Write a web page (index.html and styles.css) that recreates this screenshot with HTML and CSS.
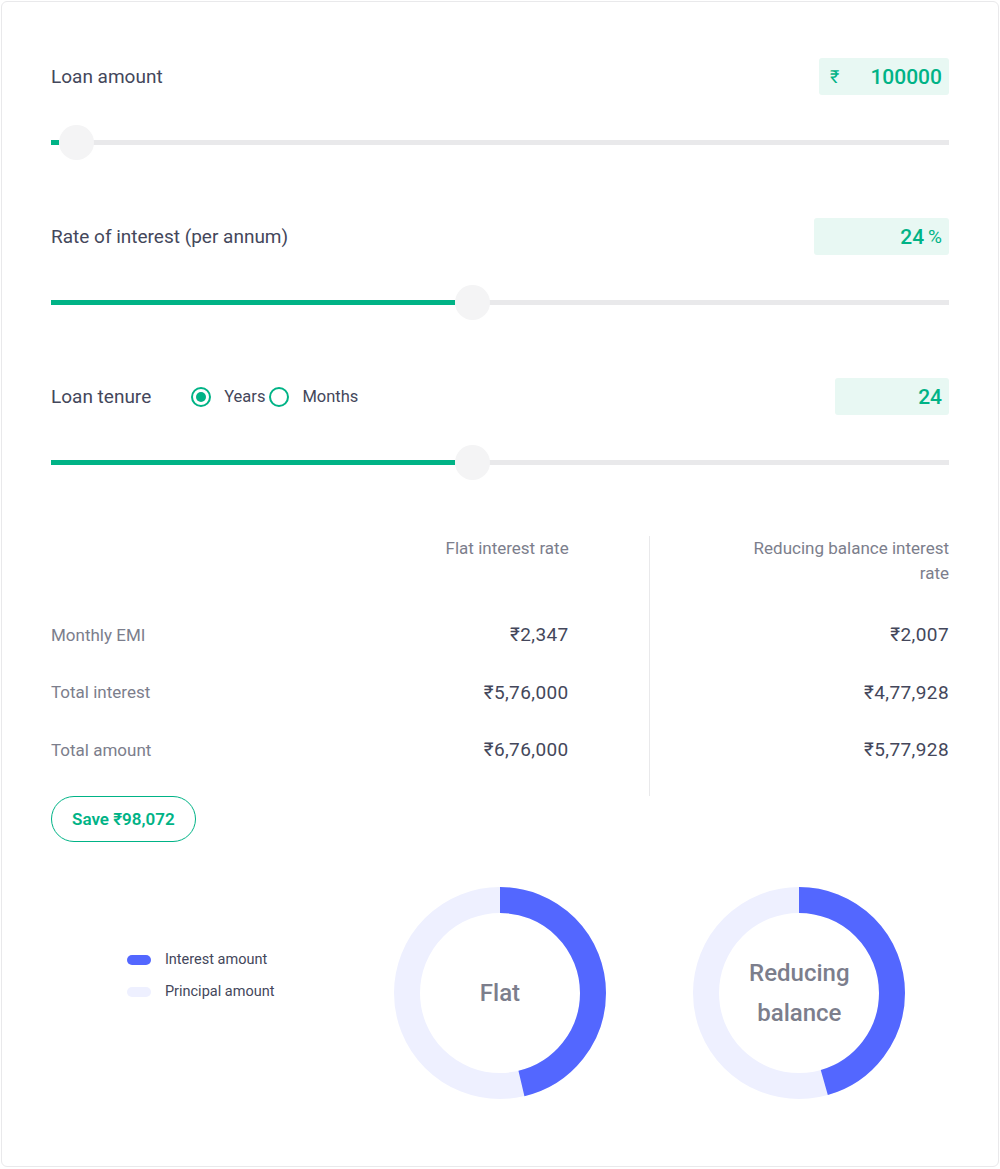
FILE: index.html
```html
<!DOCTYPE html>
<html lang="en">
<head>
  <meta charset="UTF-8">
  <meta name="viewport" content="width=device-width, initial-scale=1.0">
  <title>Flat vs Reducing Balance Calculator</title>
  <link rel="stylesheet" href="styles.css">
</head>
<body>
  <div class="calc-card">
    <div class="field">
      <div class="field-head">
        <span class="field-label">Loan amount</span>
        <div class="value-box amount-box"><span class="value-prefix">₹</span><span class="value-num">100000</span></div>
      </div>
      <div class="slider" style="--p: 0.0093">
        <div class="slider-fill"></div>
        <div class="slider-thumb"></div>
      </div>
    </div>

    <div class="field">
      <div class="field-head">
        <span class="field-label">Rate of interest (per annum)</span>
        <div class="value-box rate-box"><span class="value-num">24</span><span class="value-suffix">%</span></div>
      </div>
      <div class="slider" style="--p: 0.4687">
        <div class="slider-fill"></div>
        <div class="slider-thumb"></div>
      </div>
    </div>

    <div class="field last">
      <div class="field-head">
        <div class="tenure-left">
          <span class="field-label">Loan tenure</span>
          <div class="radio-group">
            <label class="radio checked"><span class="radio-dot"></span>Years</label>
            <label class="radio"><span class="radio-dot"></span>Months</label>
          </div>
        </div>
        <div class="value-box tenure-box"><span class="value-num">24</span></div>
      </div>
      <div class="slider" style="--p: 0.4687">
        <div class="slider-fill"></div>
        <div class="slider-thumb"></div>
      </div>
    </div>

    <div class="compare">
      <div class="compare-col">
        <div class="compare-head"></div>
        <div class="compare-cell row-label">Monthly EMI</div>
        <div class="compare-cell row-label">Total interest</div>
        <div class="compare-cell row-label">Total amount</div>
      </div>
      <div class="compare-col flat-col">
        <div class="compare-head">Flat interest rate</div>
        <div class="compare-cell row-value">₹2,347</div>
        <div class="compare-cell row-value">₹5,76,000</div>
        <div class="compare-cell row-value">₹6,76,000</div>
      </div>
      <div class="compare-col reducing-col">
        <div class="compare-head">Reducing balance interest rate</div>
        <div class="compare-cell row-value">₹2,007</div>
        <div class="compare-cell row-value">₹4,77,928</div>
        <div class="compare-cell row-value">₹5,77,928</div>
      </div>
    </div>

    <button class="save-btn">Save ₹98,072</button>

    <div class="charts">
      <ul class="legend">
        <li><span class="legend-key interest"></span>Interest amount</li>
        <li><span class="legend-key principal"></span>Principal amount</li>
      </ul>
      <div class="donut">
        <svg width="212" height="212" viewBox="0 0 212 212">
          <circle cx="106" cy="106" r="93" fill="none" stroke="#eef0ff" stroke-width="26"/>
          <circle cx="106" cy="106" r="93" fill="none" stroke="#5367ff" stroke-width="26"
                  stroke-dasharray="270 600" transform="rotate(-90 106 106)"/>
        </svg>
        <span class="donut-label">Flat</span>
      </div>
      <div class="donut">
        <svg width="212" height="212" viewBox="0 0 212 212">
          <circle cx="106" cy="106" r="93" fill="none" stroke="#eef0ff" stroke-width="26"/>
          <circle cx="106" cy="106" r="93" fill="none" stroke="#5367ff" stroke-width="26"
                  stroke-dasharray="266 600" transform="rotate(-90 106 106)"/>
        </svg>
        <span class="donut-label">Reducing<br>balance</span>
      </div>
    </div>
  </div>
</body>
</html>
```

FILE: styles.css
```css
* {
  box-sizing: border-box;
}

body {
  margin: 0;
  padding: 1px;
  font-family: Roboto, "Liberation Sans", sans-serif;
  color: #44475b;
  background: #fff;
}

.calc-card {
  width: 998px;
  border: 1px solid #e9e9eb;
  border-radius: 6px;
  padding: 56px 49px 67px;
}

/* input rows */
.field {
  margin-bottom: 58px;
}

.field.last {
  margin-bottom: 56px;
}

.field-head {
  display: flex;
  justify-content: space-between;
  align-items: center;
  height: 37px;
}

.field-label {
  font-size: 19px;
}

.value-box {
  display: flex;
  align-items: center;
  height: 37px;
  padding: 0 7px 0 11px;
  background: #e8f8f3;
  border-radius: 3px;
  color: #00b386;
  font-size: 21px;
  font-weight: 500;
}

.amount-box {
  width: 130px;
}

.rate-box {
  width: 135px;
  justify-content: flex-end;
}

.tenure-box {
  width: 114px;
  justify-content: flex-end;
}

.value-prefix {
  font-size: 18px;
  font-weight: 400;
}

.amount-box .value-num {
  margin-left: auto;
}

.value-suffix {
  font-size: 19px;
  font-weight: 400;
  margin-left: 4px;
}

.tenure-left {
  display: flex;
  align-items: center;
}

.radio-group {
  display: flex;
  align-items: center;
  margin-left: 40px;
}

.radio {
  display: flex;
  align-items: center;
  font-size: 16.5px;
  margin-right: 4px;
}

.radio-dot {
  width: 20px;
  height: 20px;
  border: 2px solid #00b386;
  border-radius: 50%;
  margin-right: 13px;
  display: flex;
  align-items: center;
  justify-content: center;
}

.radio.checked .radio-dot::after {
  content: '';
  width: 10px;
  height: 10px;
  border-radius: 50%;
  background: #00b386;
}

/* sliders */
.slider {
  position: relative;
  height: 35px;
  margin-top: 30px;
}

.slider::before {
  content: '';
  position: absolute;
  left: 0;
  right: 0;
  top: 15px;
  height: 5px;
  background: #e9e9eb;
}

.slider-fill {
  position: absolute;
  left: 0;
  top: 15px;
  height: 5px;
  width: calc(var(--p) * (100% - 35px));
  background: #00b386;
}

.slider-thumb {
  position: absolute;
  top: 0;
  left: calc(var(--p) * (100% - 35px));
  width: 35px;
  height: 35px;
  border-radius: 50%;
  background: #f4f4f5;
}

/* comparison table */
.compare {
  display: grid;
  grid-template-columns: repeat(3, 1fr);
}

.compare-col {
  padding-bottom: 17px;
}

.flat-col {
  border-right: 1px solid #e9e9eb;
  padding-right: 80px;
  text-align: right;
}

.reducing-col {
  text-align: right;
  padding-left: 80px;
}

.compare-head {
  height: 70px;
  font-size: 17px;
  line-height: 25px;
  color: #7c7e8c;
}

.compare-cell {
  height: 57.5px;
  display: flex;
  align-items: center;
}

.flat-col .compare-cell,
.reducing-col .compare-cell {
  justify-content: flex-end;
}

.row-label {
  font-size: 17px;
  color: #7c7e8c;
}

.row-value {
  font-size: 19px;
  letter-spacing: 0.4px;
  color: #44475b;
}

.save-btn {
  height: 46px;
  padding: 0 20px;
  border: 1px solid #00b386;
  border-radius: 24px;
  background: #fff;
  color: #00b386;
  font-family: inherit;
  font-size: 17px;
  font-weight: 600;
}

/* charts */
.charts {
  display: grid;
  grid-template-columns: repeat(3, 1fr);
  align-items: center;
  margin-top: 45px;
}

.legend {
  list-style: none;
  margin: 0 0 34px;
  padding: 0;
  justify-self: center;
}

.legend li {
  display: flex;
  align-items: center;
  height: 32px;
  font-size: 14.5px;
}

.legend-key {
  width: 24px;
  height: 10px;
  border-radius: 5px;
  margin-right: 14px;
}

.legend-key.interest {
  background: #5367ff;
}

.legend-key.principal {
  background: #eef0ff;
}

.donut {
  display: grid;
  justify-self: center;
}

.donut svg,
.donut-label {
  grid-area: 1 / 1;
}

.donut-label {
  place-self: center;
  text-align: center;
  font-size: 24px;
  font-weight: 500;
  line-height: 40px;
  color: #7c7e8c;
}
```
